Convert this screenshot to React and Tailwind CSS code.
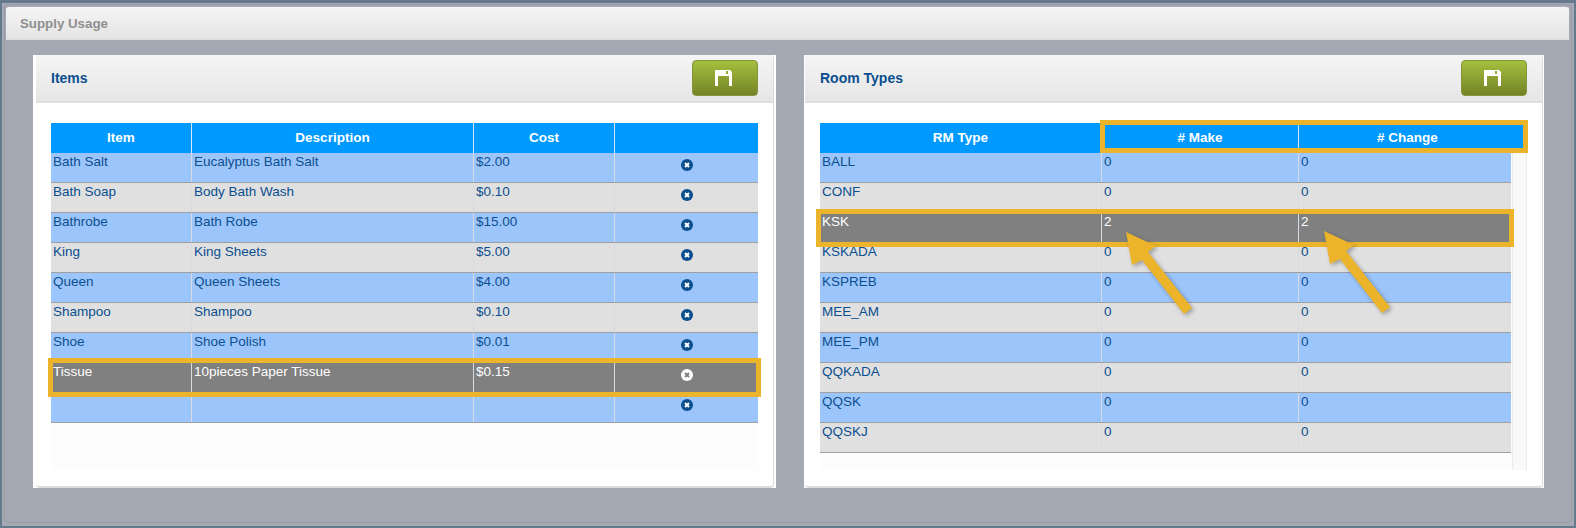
import React from "react";

const itemRows = [
  ["Bath Salt", "Eucalyptus Bath Salt", "$2.00"],
  ["Bath Soap", "Body Bath Wash", "$0.10"],
  ["Bathrobe", "Bath Robe", "$15.00"],
  ["King", "King Sheets", "$5.00"],
  ["Queen", "Queen Sheets", "$4.00"],
  ["Shampoo", "Shampoo", "$0.10"],
  ["Shoe", "Shoe Polish", "$0.01"],
  ["Tissue", "10pieces Paper Tissue", "$0.15"],
  ["", "", ""],
];

const roomRows = [
  ["BALL", 0, 0],
  ["CONF", 0, 0],
  ["KSK", 2, 2],
  ["KSKADA", 0, 0],
  ["KSPREB", 0, 0],
  ["MEE_AM", 0, 0],
  ["MEE_PM", 0, 0],
  ["QQKADA", 0, 0],
  ["QQSK", 0, 0],
  ["QQSKJ", 0, 0],
];

const SaveIcon = () => (
  <svg width="17" height="16" viewBox="0 0 17 16" fill="#fff">
    <path fillRule="evenodd" d="M0 0h15l2 2v14h-3V6H3v10H0zM11 1h2v3h-2z" />
  </svg>
);

const RemoveIcon = ({ light }) => (
  <svg width="12" height="12" viewBox="0 0 12 12">
    <circle cx="6" cy="6" r="6" fill={light ? "#fff" : "#0b4f8f"} />
    <path d="M4 4l4 4M8 4l-4 4" stroke={light ? "#808080" : "#fff"} strokeWidth="2" />
  </svg>
);

const SaveButton = () => (
  <button className="flex h-[36px] w-[66px] items-center justify-center rounded-[4px] border border-[#84963a] bg-gradient-to-b from-[#a5c03e] to-[#748327] pr-[3px]">
    <SaveIcon />
  </button>
);

const Panel = ({ title, className, children }) => (
  <section className={`h-[433px] bg-white ${className}`}>
    <div className="flex h-full flex-col rounded-[4px] border-r border-b-2 border-[#dcdcdc]">
      <header className="flex h-[48px] shrink-0 items-center justify-between border-b-2 border-[#dedede] bg-gradient-to-b from-[#f5f5f5] to-[#e6e6e6] pr-[15px] pl-[15px]">
        <h2 className="pt-[1px] text-[14px] font-bold text-[#0b4f8f]">{title}</h2>
        <SaveButton />
      </header>
      {children}
    </div>
  </section>
);

const Highlight = ({ className }) => (
  <div className={`pointer-events-none absolute border-[5px] border-[#ebb42a] ${className}`} />
);

const Arrow = ({ className }) => (
  <svg
    className={`pointer-events-none absolute drop-shadow-[2px_2px_2px_rgba(0,0,0,0.3)] ${className}`}
    width="70"
    height="86"
    viewBox="0 0 70 86"
  >
    <path d="M0 0L30 14L22 20L66 76L58 82L16 28L6 33Z" fill="#ebb42a" />
  </svg>
);

const rowColor = (i, active) => {
  if (active) return "bg-[#808080] text-white";
  return i % 2 === 0 ? "bg-[#9cc5fb] text-[#0b4f8f]" : "bg-[#e0e0e0] text-[#0b4f8f]";
};

const ItemsTable = () => (
  <div className="relative mx-[15px] mt-[20px] h-[347px] bg-[#fdfdfd]">
    <div className="flex h-[30px] items-center bg-[#0099ff] text-center font-bold text-white">
      <div className="w-[141px] border-r border-[#d5e6f5] leading-[30px]">Item</div>
      <div className="w-[282px] border-r border-[#d5e6f5] leading-[30px]">Description</div>
      <div className="w-[141px] border-r border-[#d5e6f5] leading-[30px]">Cost</div>
      <div className="flex-1" />
    </div>
    {itemRows.map((row, i) => {
      const active = row[0] === "Tissue";
      return (
        <div key={i} className={`flex h-[30px] border-b border-[#a0a0a0] ${rowColor(i, active)}`}>
          <div className="w-[141px] border-r border-[#d8dce2] pl-[2px] leading-[18px]">{row[0]}</div>
          <div className="w-[282px] border-r border-[#d8dce2] pl-[2px] leading-[18px]">{row[1]}</div>
          <div className="w-[141px] border-r border-[#d8dce2] pl-[2px] leading-[18px]">{row[2]}</div>
          <div className="flex flex-1 justify-center pt-[6px]">
            <RemoveIcon light={active} />
          </div>
        </div>
      );
    })}
    <Highlight className="top-[235px] -left-[3px] h-[39px] w-[713px]" />
  </div>
);

const RoomsTable = () => (
  <div className="relative mx-[15px] mt-[20px] h-[347px] w-[703px] bg-[#fdfdfd]">
    <div className="flex h-[30px] bg-[#0099ff] text-center font-bold text-white">
      <div className="w-[282px] border-r border-[#d5e6f5] leading-[30px]">RM Type</div>
      <div className="w-[197px] border-r border-[#d5e6f5] leading-[30px]"># Make</div>
      <div className="w-[217px] leading-[30px]"># Change</div>
    </div>
    <div className="flex h-[317px]">
      <div className="w-[691px] shrink-0">
        {roomRows.map((row, i) => {
          const active = row[0] === "KSK";
          return (
            <div key={row[0]} className={`flex h-[30px] border-b border-[#a0a0a0] ${rowColor(i, active)}`}>
              <div className="w-[282px] border-r border-[#d8dce2] pl-[2px] leading-[18px]">{row[0]}</div>
              <div className="w-[197px] border-r border-[#d8dce2] pl-[2px] leading-[18px]">{row[1]}</div>
              <div className="flex-1 pl-[2px] leading-[18px]">{row[2]}</div>
            </div>
          );
        })}
      </div>
      <div className="ml-[1px] w-[15px] shrink-0 border-x border-[#ececec] bg-[#f9f9f9]" />
    </div>
    <Highlight className="-top-[3px] left-[280px] h-[33px] w-[428px]" />
    <Highlight className="top-[86px] -left-[4px] h-[38px] w-[698px]" />
    <Arrow className="top-[109px] left-[306px]" />
    <Arrow className="top-[108px] left-[504px]" />
  </div>
);

export default function App() {
  return (
    <div
      className="h-[528px] w-[1576px] overflow-hidden border-x-2 border-t-[3px] border-b-[2px] border-[#64798c] bg-[#a5a9b4] text-[13.5px]"
      style={{ fontFamily: '"Liberation Sans", Arial, sans-serif' }}
    >
      <div className="mt-[1px] ml-[2px] h-[519px] w-[1568px] rounded-[4px] border border-[#979ba6]">
        <header className="mt-[2px] mr-[2px] ml-[1px] flex h-[33px] items-center rounded-t-[3px] border-b border-[#dedede] bg-gradient-to-b from-[#f5f5f5] to-[#e4e4e4] pt-[2px] pl-[14px] text-[13.3px] font-bold text-[#8f8f8f]">
          Supply Usage
        </header>
        <main className="flex gap-[28px] pt-[15px] pl-[28px]">
          <div className="w-[743px]">
            <Panel title="Items" className="pr-[2px] pl-[3px]">
              <ItemsTable />
            </Panel>
          </div>
          <div className="w-[740px]">
            <Panel title="Room Types" className="pr-[1px] pl-[1px]">
              <RoomsTable />
            </Panel>
          </div>
        </main>
      </div>
    </div>
  );
}
